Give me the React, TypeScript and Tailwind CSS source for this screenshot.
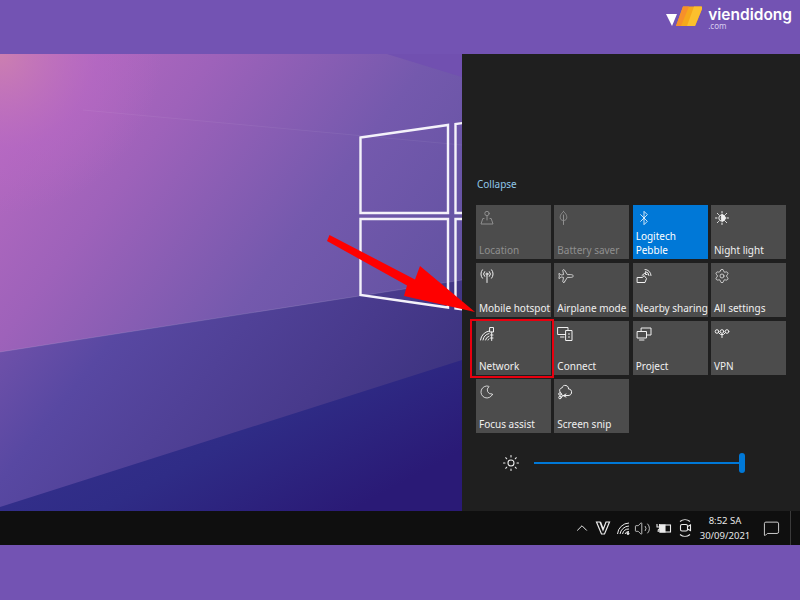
import React from "react";
import { Bluetooth, Settings, Moon, Sun, Plane, Volume2, ChevronUp, MessageSquare } from "lucide-react";

const S = ({ children, w = 16, h = 16, sw = 1 }: { children: React.ReactNode; w?: number; h?: number; sw?: number }) => (
  <svg width={w} height={h} viewBox={`0 0 ${w} ${h}`} fill="none" stroke="currentColor" strokeWidth={sw} strokeLinecap="round" strokeLinejoin="round">
    {children}
  </svg>
);

const LocationIcon = () => (
  <S>
    <circle cx="8" cy="3.5" r="2.2" />
    <path d="M8 5.700V10M5 8.500H3.800L2 14H14L12.200 8.500H11" />
  </S>
);
const LeafIcon = () => (
  <S>
    <path d="M6.500 1.500C3.500 4 2.600 7 3.600 9C4.600 11 8.400 11 9.400 9C10.400 7 9.500 4 6.500 1.500ZM6.500 5V14.500" />
  </S>
);
const NightIcon = () => (
  <S>
    <circle cx="8" cy="8" r="3.2" />
    <path d="M8 4.800A3.200 3.200 0 0 1 8 11.200C7 9.500 7 6.500 8 4.800Z" fill="currentColor" />
    <path d="M8 1.500V3M8 13V14.500M1.500 8H3M13 8H14.500M3.400 3.400L4.500 4.500M11.500 11.500L12.600 12.600M3.400 12.600L4.500 11.500M11.500 4.500L12.600 3.400" />
  </S>
);
const HotspotIcon = () => (
  <S>
    <circle cx="8" cy="6" r="1" />
    <path d="M8 7.500V14.500M5.600 3.600A3.400 3.400 0 0 0 5.600 8.400M10.400 3.600A3.400 3.400 0 0 1 10.400 8.400M3.400 1.800A6.400 6.400 0 0 0 3.400 10.200M12.600 1.800A6.400 6.400 0 0 1 12.600 10.200" />
  </S>
);
const NearbyIcon = () => (
  <S>
    <path d="M1.500 9.500H6.500L8 7.500L10.500 10.500L9 14.500H1.500ZM6 7.500L9.500 4.500V6.500H11" />
    <path d="M9 1.500A6 6 0 0 1 15 7.500M9.500 3.600A4 4 0 0 1 13 7.500" />
  </S>
);
const NetworkIcon = () => (
  <S>
    <path d="M1.500 14A11 11 0 0 1 10 5M4 14A8 8 0 0 1 10 7.500M6.500 14A5 5 0 0 1 10 10.200M9 14A2 2 0 0 1 10 12.800" />
    <rect x="11" y="1.500" width="3.500" height="4.500" />
    <path d="M12.700 6V14.500" />
    <path d="M11.500 9H14M11.500 12H14" />
  </S>
);
const ConnectIcon = () => (
  <S>
    <rect x="1" y="1.500" width="10" height="7" />
    <path d="M3.500 11H7" />
    <rect x="9" y="4.500" width="6" height="10" fill="#4c4c4c" />
    <path d="M11.500 8H12.500M11.500 11H12.500" />
  </S>
);
const ProjectIcon = () => (
  <S>
    <rect x="5.500" y="2" width="9.500" height="7" />
    <rect x="1.500" y="5.500" width="9" height="6.500" fill="#4c4c4c" />
    <path d="M3.500 14H8" />
  </S>
);
const VpnIcon = () => (
  <S>
    <circle cx="3" cy="5.500" r="1.800" />
    <circle cx="8" cy="5.500" r="1.800" />
    <circle cx="13" cy="5.500" r="1.800" />
    <path d="M4.500 6.500L6.500 8.500H9.500L11.500 6.500M8 8.500V11.500" />
  </S>
);
const SnipIcon = () => (
  <S>
    <path d="M3.500 8.500C1.500 6.500 3 4 5 4C5.500 2 7 1 9 1.500C11 2 11.500 3.500 11.500 5C13.500 5 15 6.500 14.500 9C14 11 12.500 11.500 11 11.500H6.500" />
    <circle cx="3" cy="10" r="1.300" />
    <circle cx="3" cy="13.500" r="1.300" />
    <path d="M4.200 10.600L9 13M4.200 13L9 10" />
  </S>
);

const Tile = ({
  icon,
  label,
  dim,
  active,
  marked,
}: {
  icon: React.ReactNode;
  label: React.ReactNode;
  dim?: boolean;
  active?: boolean;
  marked?: boolean;
}) => (
  <div
    className={`relative h-[54px] flex flex-col justify-between pl-[3px] pt-[5px] pb-[2px] text-[10px] leading-[13.5px] whitespace-nowrap ${
      active ? "bg-[#0078d7] text-white" : "bg-[#4c4c4c]"
    } ${dim ? "text-[#8f8f8f]" : active ? "" : "text-[#f0f0f0]"}`}
  >
    <div className="h-4 w-4">{icon}</div>
    <div>{label}</div>
    {marked && <div className="absolute -left-[6px] -right-[3px] -top-[2px] -bottom-[3px] border-2 border-[#e8000f]" />}
  </div>
);

export default function App() {
  return (
    <div
      className="relative w-[800px] h-[600px] overflow-hidden bg-[#7353b3] flex flex-col"
      style={{ fontFamily: '"Noto Sans", "Open Sans", sans-serif' }}
    >
      <header className="h-[54px] flex items-start justify-end pr-[8px] pt-[6px] shrink-0">
        <div className="flex items-start gap-[6px]">
          <svg width="36" height="21" viewBox="0 0 36 21">
            <path d="M0 8H11L6 20Z" fill="#fff" />
            <path d="M17 0.500H35Q37 0.500 36 3L29 20H10Z" fill="#f6a81c" />
            <path d="M17 0.500H23L15 20H10Z" fill="#f7902a" />
            <path d="M28 0.500H35Q37 0.500 36 3L29 20H21Z" fill="#fbc02d" />
          </svg>
          <div className="flex flex-col text-white">
            <span className="text-[15.5px] leading-[17px] font-semibold" style={{ fontFamily: "Inter, sans-serif" }}>
              viendidong
            </span>
            <span className="text-[8px] leading-[7px] text-[#d8cdf0] -mt-[1px]">.com</span>
          </div>
        </div>
      </header>

      <main className="h-[457px] flex shrink-0">
        <div className="relative w-[462px] h-full overflow-hidden">
          <svg width="462" height="457" viewBox="0 0 462 457" className="block">
            <defs>
              <linearGradient id="base" x1="0" y1="0" x2="1" y2="0.75">
                <stop offset="0" stopColor="#bd6cc2" />
                <stop offset="0.3" stopColor="#9e62ba" />
                <stop offset="0.6" stopColor="#7459ad" />
                <stop offset="1" stopColor="#5a4f9c" />
              </linearGradient>
              <radialGradient id="pink" cx="0" cy="0" r="0.35">
                <stop offset="0" stopColor="#cc7fb0" />
                <stop offset="0.6" stopColor="#b868c4" stopOpacity="0.5" />
                <stop offset="1" stopColor="#b868c4" stopOpacity="0" />
              </radialGradient>
              <linearGradient id="low" x1="0" y1="0" x2="1" y2="0.4">
                <stop offset="0" stopColor="#7a55ad" />
                <stop offset="0.3" stopColor="#5848a2" />
                <stop offset="0.75" stopColor="#483a8c" />
                <stop offset="1" stopColor="#3c337f" />
              </linearGradient>
              <linearGradient id="blue" x1="0" y1="0" x2="1" y2="0.6">
                <stop offset="0" stopColor="#3a3492" />
                <stop offset="0.6" stopColor="#2f2c86" />
                <stop offset="1" stopColor="#2a1a76" />
              </linearGradient>
            </defs>
            <rect width="462" height="457" fill="url(#base)" />
            <rect width="462" height="457" fill="url(#pink)" />
            <path d="M387 0H462V23Z" fill="#7150b0" />
            <path d="M83 56L462 91" stroke="#ffffff" strokeOpacity="0.06" />
            <path d="M0 298L462 226V457H0Z" fill="url(#low)" />
            <path d="M0 298L462 226" stroke="#ffffff" strokeOpacity="0.12" />
            <path d="M0 453L462 306V457H0Z" fill="url(#blue)" />
            <g fill="none" stroke="#f4f2fa" strokeWidth="2.4">
              <path d="M360.500 83.500L448 71V159H360.500Z" />
              <path d="M455.500 70V159H470V68Z" />
              <path d="M360.500 165H448V253.500L360.500 241Z" />
              <path d="M455.500 165H470V256L455.500 254.500Z" />
            </g>
          </svg>
        </div>
        <aside className="flex-1 bg-[#1f1f1f] pl-[14px] pr-[14px] relative z-0">
          <div className="mt-[122px] text-[10px] leading-[16px] pl-px text-[#8fc7ea]">Collapse</div>
          <div className="mt-[13px] grid grid-cols-[repeat(4,75px)] gap-x-[3.33px] gap-y-[4px]">
            <Tile dim icon={<LocationIcon />} label="Location" />
            <Tile dim icon={<LeafIcon />} label="Battery saver" />
            <Tile active icon={<Bluetooth size={16} strokeWidth={1.2} />} label={<>Logitech<br />Pebble</>} />
            <Tile icon={<NightIcon />} label="Night light" />
            <Tile icon={<HotspotIcon />} label="Mobile hotspot" />
            <Tile icon={<Plane size={16} strokeWidth={1.1} className="rotate-45" />} label="Airplane mode" />
            <Tile icon={<NearbyIcon />} label="Nearby sharing" />
            <Tile icon={<Settings size={16} strokeWidth={1.1} />} label="All settings" />
            <Tile marked icon={<NetworkIcon />} label="Network" />
            <Tile icon={<ConnectIcon />} label="Connect" />
            <Tile icon={<ProjectIcon />} label="Project" />
            <Tile icon={<VpnIcon />} label="VPN" />
            <Tile icon={<Moon size={16} strokeWidth={1.1} className="rotate-[20deg]" />} label="Focus assist" />
            <Tile icon={<SnipIcon />} label="Screen snip" />
          </div>
          <div className="mt-[19px] flex items-center h-[22px] pl-[26px]">
            <Sun size={18} strokeWidth={1.4} className="text-[#f0f0f0]" />
            <div className="ml-[14px] w-[211px] h-[2px] bg-[#0078d7] relative">
              <div className="absolute right-0 -top-[9px] w-[6px] h-[20px] rounded-full bg-[#0078d7]" />
            </div>
          </div>
        </aside>
      </main>

      <footer className="h-[34px] shrink-0 bg-[#0f0f0f] flex items-center justify-end text-[#ececec]">
        <ChevronUp size={18} strokeWidth={1.3} className="mr-[4px]" />
        <svg width="16" height="16" viewBox="0 0 16 16" fill="none" stroke="currentColor" strokeWidth="1.2" className="mr-[5px]">
          <path d="M1.500 2H5L8 10L11 2H14.500L9.500 14H6.500ZM5.500 2L8.500 10" />
        </svg>
        <svg width="16" height="16" viewBox="0 0 16 16" fill="none" stroke="currentColor" strokeWidth="1" className="mr-[2px]">
          <path d="M1.500 14A12 12 0 0 1 13 3M4 14A9.500 9.500 0 0 1 13 6M6.500 14A6.500 6.500 0 0 1 13 9M9 14A4 4 0 0 1 13 11.500" />
          <circle cx="12" cy="13.500" r="1" fill="currentColor" />
        </svg>
        <Volume2 size={17} strokeWidth={1.1} className="mr-[5px]" />
        <svg width="16" height="16" viewBox="0 0 16 16" fill="none" stroke="currentColor" strokeWidth="1.1" className="mr-[6px]">
          <rect x="4" y="5" width="10.500" height="7" />
          <rect x="4" y="5" width="5" height="7" fill="currentColor" />
          <path d="M1 4V7M3.500 4V7M0.500 7H4V8.500L2.200 10V12" />
        </svg>
        <svg width="14" height="18" viewBox="0 0 14 18" fill="none" stroke="currentColor" strokeWidth="1.1" className="mr-[4px]">
          <rect x="2.500" y="5.500" width="7" height="6.500" rx="1.500" />
          <path d="M9.500 7.500L12.500 6V11.500L9.500 10M2 2.500A8 8 0 0 1 12 2.500M2 15.500A8 8 0 0 0 12 15.500" />
        </svg>
        <div className="w-[58px] flex flex-col items-center text-[9.5px] leading-[15px] text-[#e8e8e8]">
          <span>8:52 SA</span>
          <span>30/09/2021</span>
        </div>
        <MessageSquare size={17} strokeWidth={1.2} className="ml-[9px] mr-[10px]" />
        <div className="w-px h-full bg-[#3a3a3a] mr-[9px]" />
      </footer>

      <div className="h-[55px] shrink-0" />

      <svg className="absolute left-0 top-0 pointer-events-none" width="800" height="600" viewBox="0 0 800 600">
        <path d="M329.500 235L327 241L407 285.500L404 296L475 312L420 266L415 279.500Z" fill="#fe0000" />
      </svg>
    </div>
  );
}
